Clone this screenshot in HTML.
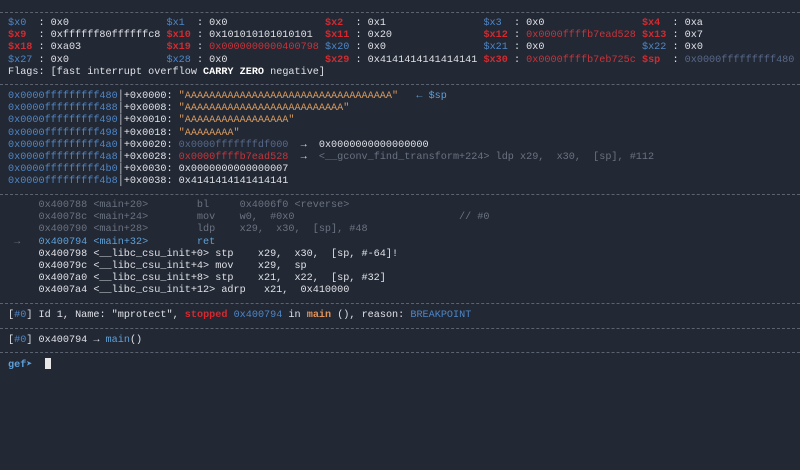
<!DOCTYPE html>
<html><head><meta charset="utf-8"><style>
html,body{margin:0;padding:0;background:#222834;width:800px;height:470px;overflow:hidden}
pre{position:absolute;left:8px;margin:0;font-family:"Liberation Mono","DejaVu Sans Mono",monospace;font-size:10.17px;line-height:12.2px;color:#dfe1e6;white-space:pre}
.sep{position:absolute;left:0;width:800px;height:0;border-top:1px dashed #5b6270}
.b{color:#4f86c6}.r{color:#d42a2f;font-weight:bold}.rv{color:#c8343a}.g{color:#6b7280}.gb{color:#57698a}.y{color:#d99a5e}.w{color:#fff;font-weight:bold}.o{color:#e0935a;font-weight:bold}.cy{color:#5ea0d8}
</style></head><body>
<div class="sep" style="top:12px"></div>
<pre style="top:18px"><span class="b">$x0 </span> : 0x0                <span class="b">$x1 </span> : 0x0                <span class="r">$x2 </span> : 0x1                <span class="b">$x3 </span> : 0x0                <span class="r">$x4 </span> : 0xa
<span class="r">$x9 </span> : 0xffffff80ffffffc8 <span class="r">$x10</span> : 0x101010101010101  <span class="r">$x11</span> : 0x20               <span class="r">$x12</span> : <span class="rv">0x0000ffffb7ead528</span> <span class="r">$x13</span> : 0x7
<span class="r">$x18</span> : 0xa03              <span class="r">$x19</span> : <span class="rv">0x0000000000400798</span> <span class="b">$x20</span> : 0x0                <span class="b">$x21</span> : 0x0                <span class="b">$x22</span> : 0x0
<span class="b">$x27</span> : 0x0                <span class="b">$x28</span> : 0x0                <span class="r">$x29</span> : 0x4141414141414141 <span class="r">$x30</span> : <span class="rv">0x0000ffffb7eb725c</span> <span class="r">$sp </span> : <span class="gb">0x0000fffffffff480</span>
Flags: [fast interrupt overflow <span class="w">CARRY</span> <span class="w">ZERO</span> negative]</pre>
<div class="sep" style="top:84px"></div>
<pre style="top:91px"><span class="b">0x0000fffffffff480</span>│+0x0000: <span class="y">"AAAAAAAAAAAAAAAAAAAAAAAAAAAAAAAAAA"</span>   <span class="cy">← $sp</span>
<span class="b">0x0000fffffffff488</span>│+0x0008: <span class="y">"AAAAAAAAAAAAAAAAAAAAAAAAAA"</span>
<span class="b">0x0000fffffffff490</span>│+0x0010: <span class="y">"AAAAAAAAAAAAAAAAA"</span>
<span class="b">0x0000fffffffff498</span>│+0x0018: <span class="y">"AAAAAAAA"</span>
<span class="b">0x0000fffffffff4a0</span>│+0x0020: <span class="gb">0x0000fffffffdf000</span>  →  0x0000000000000000
<span class="b">0x0000fffffffff4a8</span>│+0x0028: <span class="rv">0x0000ffffb7ead528</span>  →  <span class="g">&lt;__gconv_find_transform+224&gt; ldp x29,  x30,  [sp], #112</span>
<span class="b">0x0000fffffffff4b0</span>│+0x0030: 0x0000000000000007
<span class="b">0x0000fffffffff4b8</span>│+0x0038: 0x4141414141414141</pre>
<div class="sep" style="top:194px"></div>
<pre style="top:200px"><span class="g">     0x400788 &lt;main+20&gt;        bl     0x4006f0 &lt;reverse&gt;
     0x40078c &lt;main+24&gt;        mov    w0,  #0x0                           // #0
     0x400790 &lt;main+28&gt;        ldp    x29,  x30,  [sp], #48</span>
<span class="g"> →</span>   <span class="cy">0x400794 &lt;main+32&gt;        ret</span>
     0x400798 &lt;__libc_csu_init+0&gt; stp    x29,  x30,  [sp, #-64]!
     0x40079c &lt;__libc_csu_init+4&gt; mov    x29,  sp
     0x4007a0 &lt;__libc_csu_init+8&gt; stp    x21,  x22,  [sp, #32]
     0x4007a4 &lt;__libc_csu_init+12&gt; adrp   x21,  0x410000</pre>
<div class="sep" style="top:303px"></div>
<pre style="top:310px">[<span class="b">#0</span>] Id 1, Name: "mprotect", <span class="r">stopped</span> <span class="b">0x400794</span> in <span class="o">main</span> (), reason: <span class="b">BREAKPOINT</span></pre>
<div class="sep" style="top:328px"></div>
<pre style="top:335px">[<span class="b">#0</span>] 0x400794 → <span class="cy">main</span>()</pre>
<div class="sep" style="top:352px"></div>
<pre style="top:358px"><span class="cy" style="font-weight:bold">gef➤</span>  <span style="display:inline-block;width:6px;height:11px;background:#e8e8e8;vertical-align:-2px"></span></pre>
</body></html>
